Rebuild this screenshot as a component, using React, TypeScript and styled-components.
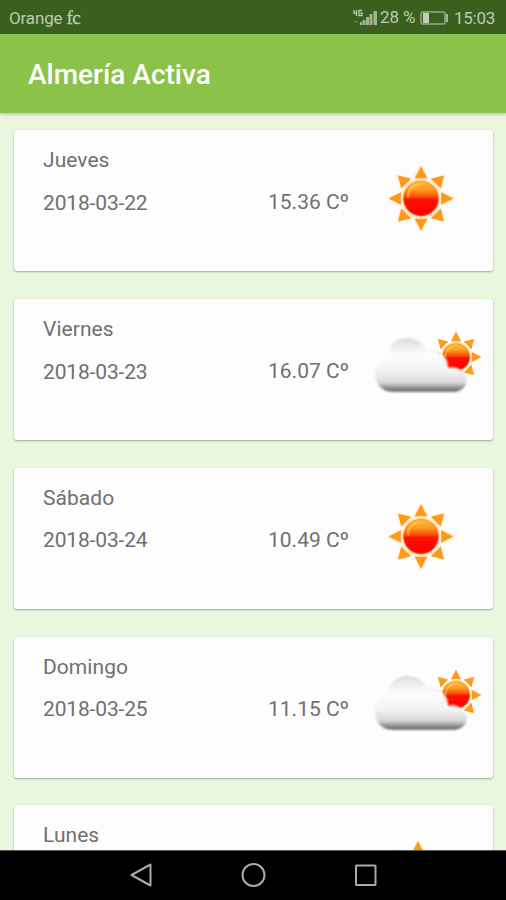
import React from "react";
import styled, { createGlobalStyle } from "styled-components";

const GlobalStyle = createGlobalStyle`
  * { box-sizing: border-box; }
  body { margin: 0; overflow: hidden; font-family: Roboto, sans-serif; }
`;

const Screen = styled.div`
  display: flex;
  flex-direction: column;
  width: 506px;
  height: 900px;
  overflow: hidden;
  background: #e9f7df;
`;

const StatusBar = styled.header`
  display: flex;
  flex: 0 0 34px;
  align-items: center;
  justify-content: space-between;
  padding: 2px 11px 0 9px;
  background: #3b601d;
  color: #bccbb2;
  font-size: 17px;
  line-height: 20px;
`;

const Carrier = styled.div`
  display: flex;
  align-items: baseline;
  gap: 4px;
  letter-spacing: -0.15px;
`;

const CarrierMark = styled.span`
  font-family: "Liberation Serif", serif;
  font-size: 19px;
  line-height: 18px;
  letter-spacing: -0.4px;
  -webkit-text-stroke: 0.3px currentColor;
`;

const StatusGroup = styled.div`
  display: flex;
  align-items: center;
`;

const Battery = styled.span`
  width: 35px;
  white-space: nowrap;
  letter-spacing: -0.1px;
  margin: -2px 5px 0 2px;
`;

const Clock = styled.span`
  width: 41px;
  margin-left: 5px;
  white-space: nowrap;
  letter-spacing: -0.25px;
`;

const StatusIcon = styled.svg`
  display: block;
  flex: none;
  margin-top: -1px;
`;

const TitleBar = styled.div`
  position: relative;
  display: flex;
  flex: 0 0 79px;
  align-items: center;
  padding: 2px 28px 0;
  background: #8bc34a;
  box-shadow: 0 1px 3px rgba(85, 45, 65, 0.35);
`;

const Title = styled.h1`
  margin: 0;
  color: #fff;
  font-size: 28px;
  font-weight: 500;
  line-height: 36px;
`;

const Forecast = styled.main`
  display: flex;
  flex: 1;
  flex-direction: column;
  gap: 27.8px;
  min-height: 0;
  padding: 17.3px 13px 0 14px;
  overflow: hidden;
`;

const Card = styled.article`
  display: grid;
  flex: 0 0 141px;
  grid-template-columns: 225px 102px 112px;
  padding-left: 29px;
  border-radius: 3px;
  background: #fdfdfd;
  color: #707070;
  box-shadow: 0 1px 2px rgba(60, 70, 55, 0.42), 0 0 1px rgba(60, 70, 55, 0.2);
`;

const DayInfo = styled.div`
  display: flex;
  flex-direction: column;
  gap: 18.6px;
  padding-top: 18px;
  font-size: 21px;
  line-height: 24px;
`;

const Day = styled.span`
  letter-spacing: 0.05px;
`;

const DateText = styled.time`
  letter-spacing: -0.15px;
`;

const Temperature = styled.span`
  padding-top: 60px;
  font-size: 21px;
  line-height: 24px;
  white-space: nowrap;
`;

const WeatherIcon = styled.svg<{ $offset?: number }>`
  display: block;
  width: 112px;
  height: 80px;
  margin: 30px 0 0 ${({ $offset = 0 }) => $offset}px;
`;

const NavBar = styled.nav`
  display: flex;
  flex: 0 0 50px;
  align-items: center;
  justify-content: center;
  gap: 84px;
  padding-bottom: 1px;
  border-top: 1px solid #555;
  background: #000;
`;

const NavIcon = styled.svg`
  width: 28px;
  height: 28px;
  fill: none;
  stroke: #aaa;
  stroke-width: 2;
`;

type Weather = "sun" | "cloud";

const rays = [0, 45, 90, 135, 180, 225, 270, 315];

function Sun({ id }: { id: string }) {
  return (
    <>
      <defs>
        <linearGradient id={`${id}-disc`} x1="0" y1="0" x2="0" y2="1">
          <stop offset="0" stopColor="#ffc53a" />
          <stop offset="0.25" stopColor="#ff9b22" />
          <stop offset="0.46" stopColor="#fa4a06" />
          <stop offset="0.54" stopColor="#fb0800" />
          <stop offset="1" stopColor="#ff0500" />
        </linearGradient>
        <radialGradient id={`${id}-rim`}>
          <stop offset="0.88" stopColor="#f84a00" stopOpacity="0" />
          <stop offset="1" stopColor="#ff9c40" stopOpacity="0.6" />
        </radialGradient>
        <filter id={`${id}-glow`} x="-30%" y="-30%" width="160%" height="160%">
          <feGaussianBlur stdDeviation="1" />
        </filter>
        <filter id={`${id}-edge`} x="-20%" y="-20%" width="140%" height="140%">
          <feGaussianBlur stdDeviation="0.6" />
        </filter>
      </defs>
      <g filter={`url(#${id}-glow)`} fill="#ffd69a">
        {rays.map((r) => (
          <path key={r} d="M0-33 7-20Q0-23-7-20Z" transform={`rotate(${r})`} />
        ))}
        <circle r="19.2" />
      </g>
      <g fill="#ff9a18" filter={`url(#${id}-edge)`}>
        {rays.map((r) => (
          <path key={r} d={r % 90 ? "M0-32.5 7-21Q0-21-7-21Z" : "M0-32.3 6.3-20Q0-20.5-6.3-20Z"} transform={`rotate(${r})`} />
        ))}
      </g>
      <g filter={`url(#${id}-edge)`}>
        <circle r="17.7" fill={`url(#${id}-disc)`} />
        <circle r="17.7" fill={`url(#${id}-rim)`} />
        <path d="M-13-2Q-13-11-4-14" fill="none" stroke="#ffd45b" strokeWidth="2.5" strokeLinecap="round" opacity=".5" />
      </g>
    </>
  );
}

function Conditions({ weather, id, offset }: { weather: Weather; id: string; offset?: number }) {
  if (weather === "sun") {
    return (
      <WeatherIcon viewBox="0 0 112 80" $offset={offset}>
        <g transform="translate(51 38.5)"><Sun id={id} /></g>
      </WeatherIcon>
    );
  }
  return (
    <WeatherIcon viewBox="0 0 112 80">
      <defs>
        <linearGradient id={`${id}-cloud`} gradientUnits="userSpaceOnUse" x1="0" y1="8" x2="0" y2="63.5">
          <stop offset="0" stopColor="#d8d8d8" />
          <stop offset="0.2" stopColor="#f1f1f1" />
          <stop offset="0.34" stopColor="#fcfcfc" />
          <stop offset="0.62" stopColor="#f3f3f3" />
          <stop offset="0.82" stopColor="#d9d9d9" />
          <stop offset="0.88" stopColor="#adadad" />
          <stop offset="0.96" stopColor="#6f6f6f" />
          <stop offset="1" stopColor="#858585" />
        </linearGradient>
        <filter id={`${id}-soft`} x="-10%" y="-10%" width="120%" height="120%">
          <feGaussianBlur stdDeviation="0.8" />
        </filter>
      </defs>
      <g transform="translate(86 28) scale(.78)"><Sun id={id} /></g>
      <path
        d="M23 63C11 63 5 54 5 45C5 35 11 28 18 25C20 15 27 9 37 9C47 9 54 14 57 22C63 20 69 21 73 26C77 30 78 34 78 39C84 37 91 39 95 46C100 53 94 63 83 63Z"
        fill={`url(#${id}-cloud)`}
        filter={`url(#${id}-soft)`}
      />
    </WeatherIcon>
  );
}

const forecast: { day: string; date: string; temperature: string; weather: Weather; offset?: number }[] = [
  { day: "Jueves", date: "2018-03-22", temperature: "15.36 Cº", weather: "sun" },
  { day: "Viernes", date: "2018-03-23", temperature: "16.07 Cº", weather: "cloud" },
  { day: "Sábado", date: "2018-03-24", temperature: "10.49 Cº", weather: "sun" },
  { day: "Domingo", date: "2018-03-25", temperature: "11.15 Cº", weather: "cloud" },
  { day: "Lunes", date: "", temperature: "", weather: "sun", offset: -3 },
];

export default function App() {
  return (
    <>
      <GlobalStyle />
      <Screen>
        <StatusBar>
          <Carrier>Orange<CarrierMark>fc</CarrierMark></Carrier>
          <StatusGroup>
            <StatusIcon width="26" height="18" viewBox="0 0 26 18" fill="#9fb48f">
              <path d="M2 1v3h3M4.5 1v6M10 1.5H7v5h3V4H8.5" fill="none" stroke="#bccbb2" strokeWidth="1.3" />
              <path d="M2 12h4v1.5H2Z" opacity=".35" />
              <path d="M8 13h2v3H8ZM10.5 11h3v5h-3ZM14 8h3v8h-3ZM17.5 5h3v11h-3ZM21.5 2H25v14h-3.5Z" />
            </StatusIcon>
            <Battery>28 %</Battery>
            <StatusIcon width="29" height="16" viewBox="0 0 29 16">
              <path d="M3 2h20q2 0 2 2v8q0 2-2 2H3q-2 0-2-2V4q0-2 2-2Z" fill="none" stroke="#80986f" strokeWidth="2" />
              <path d="M3 3h6v10H3Z" fill="#c2ceb9" />
              <path d="M26 4h2v8h-2Z" fill="#a3b596" />
            </StatusIcon>
            <Clock>15:03</Clock>
          </StatusGroup>
        </StatusBar>
        <TitleBar><Title>Almería Activa</Title></TitleBar>
        <Forecast>
          {forecast.map((item, index) => (
            <Card key={item.day}>
              <DayInfo><Day>{item.day}</Day><DateText>{item.date}</DateText></DayInfo>
              <Temperature>{item.temperature}</Temperature>
              <Conditions weather={item.weather} id={`weather-${index}`} offset={item.offset} />
            </Card>
          ))}
        </Forecast>
        <NavBar>
          <NavIcon viewBox="0 0 28 28"><path d="M23.5 3.5v21L4.5 14Z" strokeLinejoin="round" /></NavIcon>
          <NavIcon viewBox="0 0 28 28"><circle cx="14.5" cy="14" r="11" /></NavIcon>
          <NavIcon viewBox="0 0 28 28"><rect x="5" y="4.5" width="19.5" height="19.5" rx=".5" /></NavIcon>
        </NavBar>
      </Screen>
    </>
  );
}
